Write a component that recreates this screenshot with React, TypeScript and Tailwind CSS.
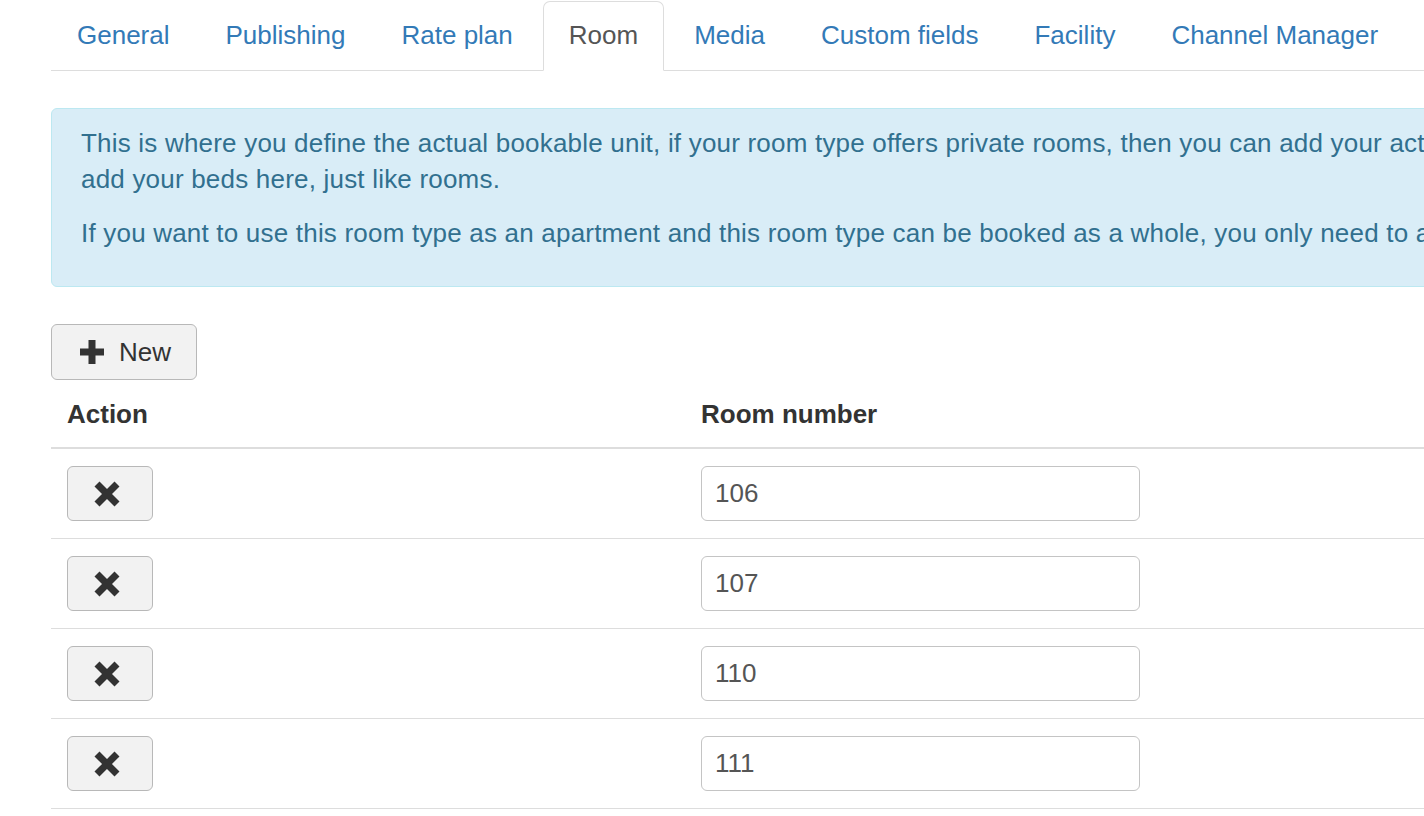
import React from "react";

const tabs = ["General", "Publishing", "Rate plan", "Room", "Media", "Custom fields", "Facility", "Channel Manager"];
const rooms = ["106", "107", "110", "111"];

function PlusIcon() {
  return (
    <svg width="24" height="24" viewBox="0 0 24 24" aria-hidden="true">
      <rect x="8.5" y="0" width="7" height="24" fill="#333" />
      <rect x="0" y="8.5" width="24" height="7" fill="#333" />
    </svg>
  );
}

function RemoveIcon() {
  return (
    <svg width="26" height="26" viewBox="0 0 26 26" aria-hidden="true">
      <line x1="3" y1="3" x2="23" y2="23" stroke="#333" strokeWidth="7" />
      <line x1="23" y1="3" x2="3" y2="23" stroke="#333" strokeWidth="7" />
    </svg>
  );
}

export default function App() {
  return (
    <div className="w-[1424px] h-[816px] overflow-hidden bg-white text-[#333] font-['Liberation_Sans',Arial,sans-serif] text-[26px] leading-[36px]">
      <div className="w-[1700px] pl-[51px]">
        {/* tabs */}
        <ul className="flex pt-px border-b border-[#ddd]">
          {tabs.map((tab) => {
            const active = tab === "Room";
            return (
              <li key={tab} className="-mb-px mr-[4px]">
                <a
                  href="#"
                  className={
                    active
                      ? "block px-[25px] pt-[15px] pb-[17px] rounded-t-[7px] border border-[#ddd] border-b-white bg-white text-[#555]"
                      : "block px-[25px] pt-[15px] pb-[17px] rounded-t-[7px] border border-transparent text-[#337ab7]"
                  }
                >
                  {tab}
                </a>
              </li>
            );
          })}
        </ul>

        {/* info */}
        <div className="mt-[37px] border border-[#bce8f1] bg-[#d9edf7] text-[#31708f] rounded-[6px] pl-[29px] pt-[16px] pb-[35px] tracking-[0.2px]">
          <p className="mb-[18px] whitespace-nowrap">
            This is where you define the actual bookable unit, if your room type offers private rooms, then you can add your actual rooms here, if your room type offers dorm beds, then you can
            <br />
            add your beds here, just like rooms.
          </p>
          <p className="whitespace-nowrap">
            If you want to use this room type as an apartment and this room type can be booked as a whole, you only need to add one room.
          </p>
        </div>

        <button className="mt-[37px] h-[56px] w-[146px] flex items-center gap-[15px] pl-[28px] border border-[#b8b8b8] rounded-[6px] bg-[#f2f2f2] text-[#333]">
          <PlusIcon />
          <span>New</span>
        </button>

        {/* rooms */}
        <table className="w-full border-collapse">
          <thead>
            <tr className="border-b-2 border-[#ddd]">
              <th className="w-[634px] text-left font-bold pl-[16px] pt-[16px] pb-[15px]">Action</th>
              <th className="text-left font-bold pl-[16px] pt-[16px] pb-[15px]">Room number</th>
            </tr>
          </thead>
          <tbody>
            {rooms.map((room) => (
              <tr key={room} className="border-b border-[#ddd]">
                <td className="pl-[16px] py-[17px] align-top">
                  <button className="w-[86px] h-[55px] flex items-center justify-center pr-[6px] border border-[#b8b8b8] rounded-[6px] bg-[#f2f2f2]">
                    <RemoveIcon />
                  </button>
                </td>
                <td className="pl-[16px] py-[17px] align-top">
                  <input
                    defaultValue={room}
                    className="block w-[439px] h-[55px] px-[13px] border border-[#c4c4c4] rounded-[6px] text-[#555] bg-white outline-none"
                  />
                </td>
              </tr>
            ))}
          </tbody>
        </table>
      </div>
    </div>
  );
}
